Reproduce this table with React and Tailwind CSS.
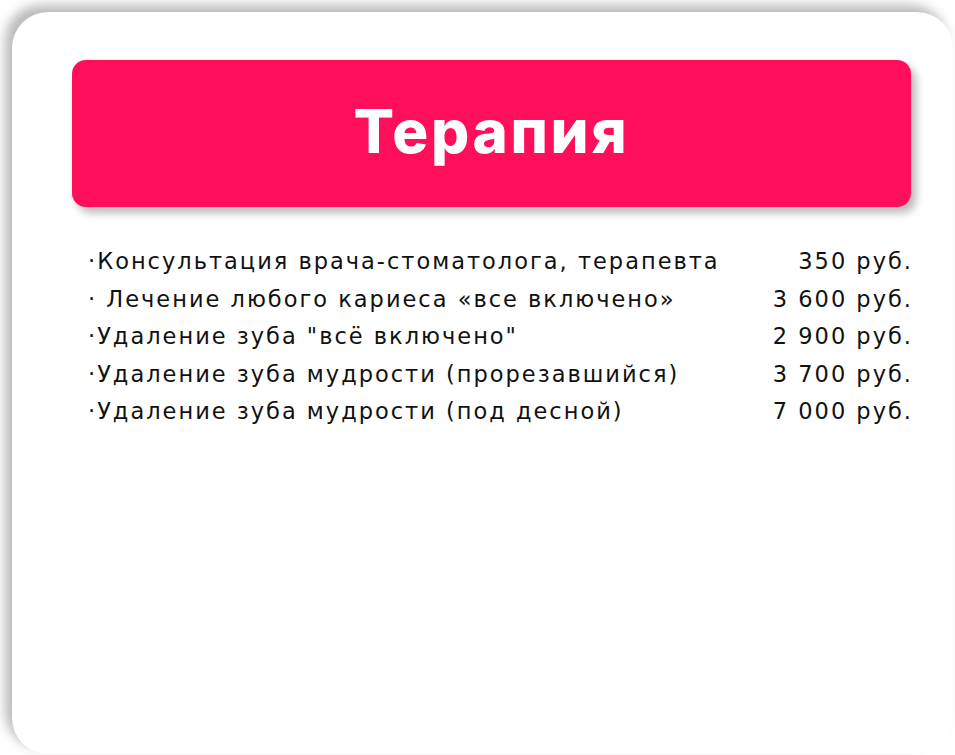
import React from 'react';

const services = [
  { name: '·Консультация врача-стоматолога, терапевта', price: '350 руб.' },
  { name: '· Лечение любого кариеса «все включено»', price: '3 600 руб.' },
  { name: '·Удаление зуба "всё включено"', price: '2 900 руб.' },
  { name: '·Удаление зуба мудрости (прорезавшийся)', price: '3 700 руб.' },
  { name: '·Удаление зуба мудрости (под десной)', price: '7 000 руб.' },
];

const App = () => {
  return (
    <div className="h-[755px] w-[955px] overflow-hidden bg-white pl-[12px] pt-[12px]">
      <div className="h-[742px] w-[941px] rounded-[36px] bg-white pl-[60px] pt-[48px] shadow-[-7px_-7px_12px_rgba(0,0,0,0.28)]">
        <div className="flex h-[147px] w-[839px] items-center justify-center rounded-[14px] bg-[#ff0e5a] pb-[6px] shadow-[5px_6px_9px_rgba(0,0,0,0.28)]">
          <h1 className="font-['Inter',sans-serif] text-[60px] font-extrabold leading-none tracking-[2.7px] text-white">Терапия</h1>
        </div>
        <div className="mt-[36px] w-[839px] pl-[16px] font-['DejaVu_Sans',sans-serif] text-[22.5px] leading-[37.5px] tracking-[2px] text-[#111]">
          {services.map((s) => (
            <div key={s.price} className="flex justify-between">
              <span>{s.name}</span>
              <span className="-mr-[2px]">{s.price}</span>
            </div>
          ))}
        </div>
      </div>
    </div>
  );
};

export default App;
